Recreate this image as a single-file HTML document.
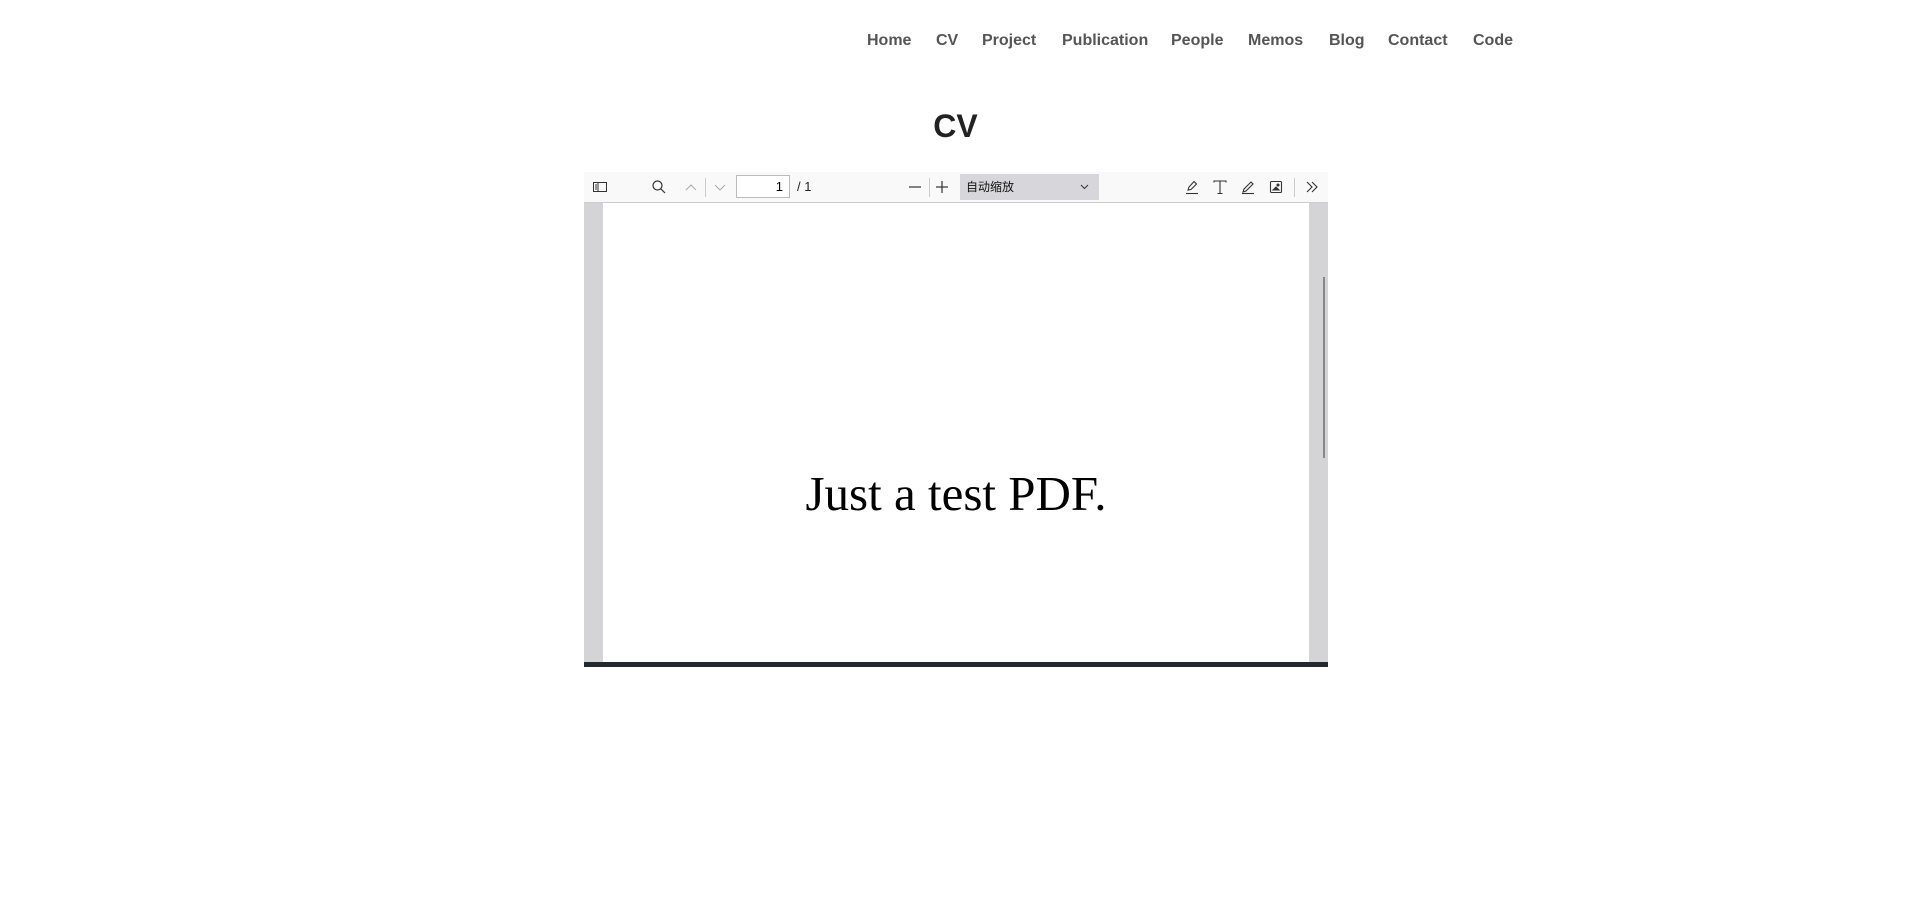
<!DOCTYPE html>
<html><head><meta charset="utf-8"><style>
body{margin:0;background:#fff;width:1911px;height:910px;position:relative;overflow:hidden;font-family:"Liberation Sans","Noto Sans CJK SC",sans-serif}
.nav a{position:absolute;top:31px;font-size:16px;font-weight:bold;color:#555;text-decoration:none;line-height:20px}
h1{position:absolute;left:0;width:1911px;text-align:center;top:106px;margin:0;font-size:32px;font-weight:bold;color:#222;line-height:40px}
.viewer{position:absolute;left:584px;top:172px;width:744px;height:495px;background:#d4d4d7}
.tb{position:absolute;left:0;top:0;width:744px;height:30px;background:#f9f9fa;border-bottom:1px solid #ccc}
.page{position:absolute;left:19px;top:31px;width:706px;height:631px;background:#fff}
.bar{position:absolute;left:0;top:490px;width:744px;height:5px;background:#222a30}
.ic{position:absolute;top:7px}
.sep{position:absolute;top:6px;width:1px;height:19px;background:#ccc}
</style></head><body>
<div class="nav">
<a style="left:867px">Home</a><a style="left:936px">CV</a><a style="left:982px">Project</a><a style="left:1062px">Publication</a><a style="left:1171px">People</a><a style="left:1248px">Memos</a><a style="left:1329px">Blog</a><a style="left:1388px">Contact</a><a style="left:1473px">Code</a>
</div>
<h1>CV</h1>
<div class="viewer">
<div class="page"><div style="position:absolute;left:0;width:706px;text-align:center;top:262px;font-family:'Liberation Serif',serif;font-size:49px;color:#000">Just a test PDF.</div></div>
<div style="position:absolute;left:739px;top:105px;width:2px;height:181px;background:#888"></div>
<div class="tb">
<svg class="ic" style="left:8px" width="16" height="16" viewBox="0 0 16 16" fill="none" stroke="#333" stroke-width="1"><rect x="1.5" y="3.5" width="13" height="9"/><line x1="6" y1="3.5" x2="6" y2="12.5"/><line x1="3" y1="6" x2="5" y2="6"/><line x1="3" y1="8" x2="5" y2="8"/><line x1="3" y1="10" x2="5" y2="10"/></svg>
<svg class="ic" style="left:67px" width="16" height="16" viewBox="0 0 16 16" fill="none" stroke="#333" stroke-width="1.2"><circle cx="6.5" cy="6.5" r="4.5"/><line x1="10" y1="10" x2="14" y2="14"/></svg>
<svg class="ic" style="left:99px" width="16" height="16" viewBox="0 0 16 16" fill="none" stroke="#aaa" stroke-width="1"><polyline points="3,11 8,6 13,11"/></svg>
<div class="sep" style="left:121px"></div>
<svg class="ic" style="left:128px" width="16" height="16" viewBox="0 0 16 16" fill="none" stroke="#aaa" stroke-width="1"><polyline points="3,6 8,11 13,6"/></svg>
<div style="position:absolute;left:152px;top:3px;width:54px;border:1px solid #bbb;background:#fff;font-size:13px;text-align:right;line-height:21px;box-sizing:border-box;padding-right:6px;height:23px">1</div>
<div style="position:absolute;left:213px;top:7px;font-size:13px;color:#222">/ 1</div>
<svg class="ic" style="left:323px" width="16" height="16" viewBox="0 0 16 16" stroke="#333" stroke-width="1.2"><line x1="2" y1="8" x2="14" y2="8"/></svg>
<div class="sep" style="left:345px"></div>
<svg class="ic" style="left:350px" width="16" height="16" viewBox="0 0 16 16" stroke="#333" stroke-width="1.2"><line x1="2" y1="8" x2="14" y2="8"/><line x1="8" y1="2" x2="8" y2="14"/></svg>
<div style="position:absolute;left:376px;top:2px;width:139px;height:26px;background:#d7d7db;font-size:12px;line-height:26px;padding-left:6px;box-sizing:border-box;color:#111">自动缩放
<svg style="position:absolute;left:120px;top:10px" width="9" height="6" viewBox="0 0 9 6" fill="none" stroke="#333"><polyline points="1,1 4.5,4.5 8,1"/></svg></div>
<svg class="ic" style="left:600px" width="16" height="16" viewBox="0 0 16 16" fill="none" stroke="#333" stroke-width="1.1"><path d="M4 11 L5 8 L10 2.5 L12.5 5 L7 10.5 Z"/><line x1="2" y1="14.5" x2="14" y2="14.5"/></svg>
<svg class="ic" style="left:628px" width="16" height="16" viewBox="0 0 16 16" fill="none" stroke="#333" stroke-width="1.1"><path d="M2 3.5 V2 H14 V3.5 M8 2 V14.5 M5.5 14.5 H10.5"/></svg>
<svg class="ic" style="left:656px" width="16" height="16" viewBox="0 0 16 16" fill="none" stroke="#333" stroke-width="1.1"><path d="M3 13 L4 10 L11 3 L13 5 L6 12 Z"/><line x1="2" y1="14.5" x2="14" y2="14.5"/></svg>
<svg class="ic" style="left:684px" width="16" height="16" viewBox="0 0 16 16" fill="none" stroke="#333" stroke-width="1.1"><rect x="2.5" y="2.5" width="11" height="11" rx="1"/><path d="M5 11 L8 8 L11 11 Z" fill="#333"/><circle cx="10" cy="6" r="1" fill="#333"/></svg>
<div class="sep" style="left:710px"></div>
<svg class="ic" style="left:720px" width="16" height="16" viewBox="0 0 16 16" fill="none" stroke="#333" stroke-width="1.1"><polyline points="3,3 8,8 3,13"/><polyline points="8,3 13,8 8,13"/></svg>
</div>
<div class="bar"></div>
</div>
</body></html>
